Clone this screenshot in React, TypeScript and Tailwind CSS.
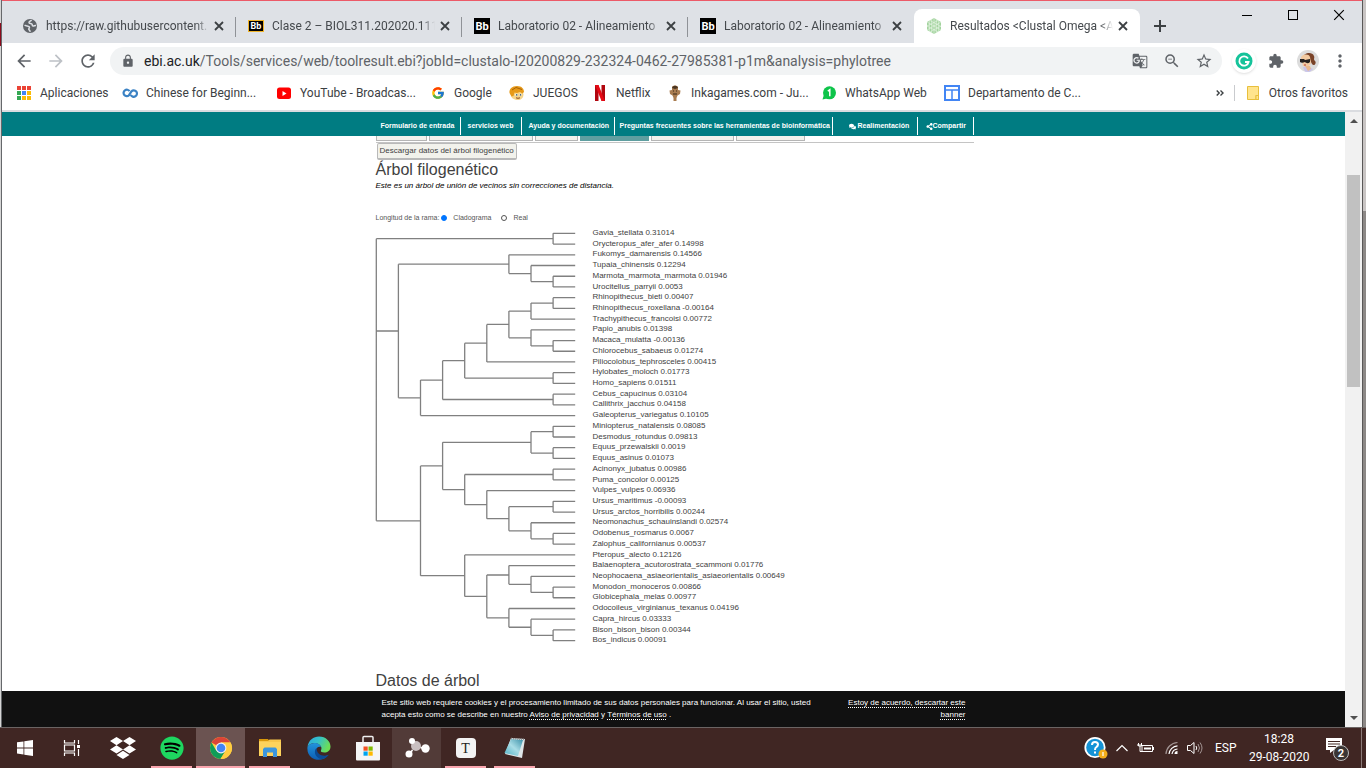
import { useState } from "react";
import type { ReactNode } from "react";
import { FaComments, FaDropbox, FaShareAlt, FaSpotify } from "react-icons/fa";
import {
  MdArrowBack,
  MdArrowForward,
  MdExtension,
  MdLock,
  MdMoreVert,
  MdRefresh,
  MdStarBorder,
  MdZoomOut,
  MdGTranslate,
} from "react-icons/md";
import { FcGoogle } from "react-icons/fc";

/* ---------- Phylogenetic tree ---------- */

type Tree = string | Tree[];

const TREE: Tree = [
  ["Gavia_stellata 0.31014", "Orycteropus_afer_afer 0.14998"],
  [
    [
      "Fukomys_damarensis 0.14566",
      ["Tupaia_chinensis 0.12294", ["Marmota_marmota_marmota 0.01946", "Urocitellus_parryii 0.0053"]],
    ],
    [
      [
        [
          [
            [
              [["Rhinopithecus_bieti 0.00407", "Rhinopithecus_roxellana -0.00164"], "Trachypithecus_francoisi 0.00772"],
              ["Papio_anubis 0.01398", ["Macaca_mulatta -0.00136", "Chlorocebus_sabaeus 0.01274"]],
            ],
            "Piliocolobus_tephrosceles 0.00415",
          ],
          ["Hylobates_moloch 0.01773", "Homo_sapiens 0.01511"],
        ],
        ["Cebus_capucinus 0.03104", "Callithrix_jacchus 0.04158"],
      ],
      "Galeopterus_variegatus 0.10105",
    ],
  ],
  [
    [
      [
        ["Miniopterus_natalensis 0.08085", "Desmodus_rotundus 0.09813"],
        ["Equus_przewalskii 0.0019", "Equus_asinus 0.01073"],
      ],
      [
        ["Acinonyx_jubatus 0.00986", "Puma_concolor 0.00125"],
        [
          "Vulpes_vulpes 0.06936",
          [
            ["Ursus_maritimus -0.00093", "Ursus_arctos_horribilis 0.00244"],
            ["Neomonachus_schauinslandi 0.02574", ["Odobenus_rosmarus 0.0067", "Zalophus_californianus 0.00537"]],
          ],
        ],
      ],
    ],
    [
      "Pteropus_alecto 0.12126",
      [
        [
          "Balaenoptera_acutorostrata_scammoni 0.01776",
          [
            "Neophocaena_asiaeorientalis_asiaeorientalis 0.00649",
            ["Monodon_monoceros 0.00866", "Globicephala_melas 0.00977"],
          ],
        ],
        [
          "Odocoileus_virginianus_texanus 0.04196",
          ["Capra_hircus 0.03333", ["Bison_bison_bison 0.00344", "Bos_indicus 0.00091"]],
        ],
      ],
    ],
  ],
];

const TREE_WIDTH = 200;
const TREE_HEIGHT = 418;
const LEVEL = 22.1;

function layoutTree(tree: Tree) {
  const leaves: string[] = [];
  const paths: string[] = [];
  const total = JSON.stringify(tree).match(/"/g)!.length / 2;
  const step = TREE_HEIGHT / total;

  function place(node: Tree): { y: number; height: number } {
    if (typeof node === "string") {
      leaves.push(node);
      return { y: (leaves.length - 0.5) * step, height: 0 };
    }
    const kids = node.map(place);
    const height = Math.max(...kids.map((k) => k.height)) + 1;
    const tip = TREE_WIDTH - 0.8;
    const x = tip - height * LEVEL;
    const top = kids[0].y;
    const bottom = kids[kids.length - 1].y;
    paths.push(`M${x} ${top}V${bottom}`);
    kids.forEach((k) => paths.push(`M${x} ${k.y}H${tip - k.height * LEVEL}`));
    return { y: (top + bottom) / 2, height };
  }

  place(tree);
  return { leaves, d: paths.join("") };
}

const { leaves: LEAVES, d: TREE_PATH } = layoutTree(TREE);

/* ---------- Browser chrome ---------- */

function Cross({ className }: { className: string }) {
  return (
    <svg viewBox="0 0 10 10" className={className} fill="none" stroke="currentColor">
      <path d="M1 1l8 8M9 1l-8 8" />
    </svg>
  );
}

function GlobeIcon() {
  return (
    <svg viewBox="0 0 16 16" className="size-4">
      <circle cx="8" cy="8" r="7" fill="#5f6368" />
      <path
        d="M2.600 7.200c1.600 1.200 3.600.4 4.600 1.600s-.8 1.600-.4 2.600 1.400.8 1.200 2.400M9.600 2.200c-.6 1-2.600.8-2.600 2.200s2.400.8 3 1.800-.2 1.600 1 1.800 1.600-.8 3-.6"
        fill="none"
        stroke="#dee1e6"
        strokeWidth="1.500"
      />
    </svg>
  );
}

function BbIcon({ gold }: { gold?: boolean }) {
  return gold ? (
    <span className="flex h-3 w-4 items-center justify-center border border-[#f0b429] bg-black text-[9px] leading-none font-bold text-white">
      Bb
    </span>
  ) : (
    <span className="flex size-4 items-center justify-center bg-black text-[11px] leading-none font-bold text-white">
      Bb
    </span>
  );
}

function HexIcon() {
  return (
    <svg viewBox="0 0 16 16" className="size-4">
      <path d="M8 0l7 4v8l-7 4-7-4V4z" fill="#a3d39e" />
      <path
        d="M1 4l14 8M1 8l11 6M4 2.500l11 6M15 4L1 12M15 8L4 14M12 2.500L1 8M3.300 2v12M5.700 1v14M8 0v16M10.300 1v14M12.700 2v12"
        stroke="#e9f6e8"
        strokeWidth=".6"
      />
    </svg>
  );
}

const TABS: { title: string; icon: ReactNode; active?: boolean; divider?: boolean }[] = [
  { title: "https://raw.githubusercontent.", icon: <GlobeIcon />, divider: true },
  { title: "Clase 2 – BIOL311.202020.1117", icon: <BbIcon gold />, divider: true },
  { title: "Laboratorio 02 - Alineamiento", icon: <BbIcon />, divider: true },
  { title: "Laboratorio 02 - Alineamiento", icon: <BbIcon /> },
  { title: "Resultados <Clustal Omega <A", icon: <HexIcon />, active: true },
];

function TabStrip() {
  return (
    <div className="flex h-[42px] shrink-0 bg-[#dee1e6] pl-2">
      <div className="flex min-w-0 flex-1 items-end">
        {TABS.map((tab, i) => (
          <div
            key={i}
            className={
              tab.active
                ? "relative flex h-[34px] w-[226px] min-w-0 items-center rounded-t-lg bg-white pr-[9px] pl-3"
                : "relative flex h-[34px] w-[226px] min-w-0 items-center pr-[9px] pl-3"
            }
          >
            <span className="flex w-4 shrink-0 justify-center">{tab.icon}</span>
            <span className="ml-2 flex-1 overflow-hidden mask-r-from-92% text-[12px] whitespace-nowrap text-[#45494d]">
              {tab.title}
            </span>
            <button aria-label="Cerrar pestaña" className="ml-[2px] flex size-4 shrink-0 items-center justify-center text-[#3c4043]">
              <Cross className="size-[10px] stroke-[1.8]" />
            </button>
            {tab.divider && <span className="absolute top-2 right-0 h-5 w-px bg-[#8f9297]" />}
          </div>
        ))}
        <button aria-label="Nueva pestaña" className="ml-[10px] flex h-[34px] w-5 items-center justify-center text-[#3c4043]">
          <svg viewBox="0 0 12 12" className="size-3" stroke="currentColor" strokeWidth="2">
            <path d="M6 0v12M0 6h12" />
          </svg>
        </button>
      </div>
      <div className="flex h-7 text-black">
        <button aria-label="Minimizar" className="flex w-[46px] items-center justify-center">
          <span className="h-px w-[10px] bg-black" />
        </button>
        <button aria-label="Maximizar" className="flex w-[46px] items-center justify-center">
          <span className="size-[10px] border border-black" />
        </button>
        <button aria-label="Cerrar" className="flex w-[46px] items-center justify-center">
          <Cross className="size-3 stroke-1" />
        </button>
      </div>
    </div>
  );
}

function Toolbar() {
  return (
    <div className="flex h-9 shrink-0 items-center bg-white px-[6px] text-[#5f6368]">
      <button aria-label="Atrás" className="flex w-8 justify-center">
        <MdArrowBack className="size-5" />
      </button>
      <button aria-label="Adelante" className="flex w-8 justify-center text-[#bdc1c6]">
        <MdArrowForward className="size-5" />
      </button>
      <button aria-label="Recargar" className="flex w-8 justify-center">
        <MdRefresh className="size-5" />
      </button>
      <div className="mx-[6px] flex h-7 min-w-0 flex-1 items-center rounded-full bg-[#f1f3f4] pr-[2px] pl-[11px]">
        <MdLock className="size-[14px] shrink-0" />
        <div className="ml-[9px] min-w-0 flex-1 overflow-hidden text-[14px] whitespace-nowrap">
          <span className="text-[#202124]">ebi.ac.uk</span>
          <span>/Tools/services/web/toolresult.ebi?jobId=clustalo-I20200829-232324-0462-27985381-p1m&amp;analysis=phylotree</span>
        </div>
        <button aria-label="Traducir" className="flex w-8 justify-center">
          <MdGTranslate className="size-4" />
        </button>
        <button aria-label="Zoom" className="flex w-8 justify-center">
          <MdZoomOut className="size-[18px]" />
        </button>
        <button aria-label="Marcar" className="flex w-8 justify-center">
          <MdStarBorder className="size-[18px]" />
        </button>
      </div>
      <button aria-label="Grammarly" className="flex w-8 justify-center">
        <svg viewBox="0 0 24 24" className="size-6 rounded-full bg-white shadow">
          <circle cx="12" cy="12" r="8.500" fill="#15c39a" />
          <path d="M16 9.500A4.700 4.700 0 1 0 16.600 13H13" fill="none" stroke="#fff" strokeWidth="1.800" />
        </svg>
      </button>
      <button aria-label="Extensiones" className="flex w-8 justify-center">
        <MdExtension className="size-4" />
      </button>
      <button aria-label="Perfil" className="flex w-8 justify-center">
        <svg viewBox="0 0 22 22" className="size-[22px] rounded-full bg-[#dcdcdc]">
          <path d="M6 8c0-5 9-7 11-2 1 2-1 3 1 5s-1 6-3 3l-3-6z" fill="#7a4328" />
          <path d="M4 8c0-4 8-5 9-1l1 6-3 4-5-1z" fill="#f2c9a0" />
          <path d="M3 9h4l1 1 5-1v3c-2 2-4 1-5 0-2 1-4 1-5 0z" fill="#26211f" />
          <path d="M6 17h6l4 2-3 3H8z" fill="#c9c4ea" />
          <path d="M8 16h5l1 3-3 2z" fill="#eab98e" />
          <path d="M7 15h2" stroke="#b03a35" />
        </svg>
      </button>
      <button aria-label="Menú" className="flex w-8 justify-center">
        <MdMoreVert className="size-5" />
      </button>
    </div>
  );
}

function AppsIcon() {
  const colors = ["#ea4335", "#ea4335", "#ea4335", "#34a853", "#4285f4", "#fbbc05", "#34a853", "#fbbc05", "#fbbc05"];
  return (
    <svg viewBox="0 0 16 16" className="size-4">
      {colors.map((c, i) => (
        <rect key={i} x={1 + (i % 3) * 5} y={1 + Math.floor(i / 3) * 5} width="4" height="4" fill={c} />
      ))}
    </svg>
  );
}

const BOOKMARKS: { label: string; width: string; icon: ReactNode }[] = [
  { label: "Aplicaciones", width: "w-[106px]", icon: <AppsIcon /> },
  {
    label: "Chinese for Beginn...",
    width: "w-[154px]",
    icon: (
      <svg viewBox="0 0 16 16" className="size-4" fill="none" stroke="#3b82c4" strokeWidth="2.200">
        <path d="M7.500 6.200A3.200 3.200 0 1 0 7 10.200L9.400 6.400a3.200 3.200 0 1 1-.6 3.400" />
      </svg>
    ),
  },
  {
    label: "YouTube - Broadcas...",
    width: "w-[154px]",
    icon: (
      <svg viewBox="0 0 16 16" className="size-4">
        <rect x="1" y="2.500" width="14" height="11.500" rx="2.500" fill="#f00" />
        <path d="M6.500 6v5l4-2.500z" fill="#fff" />
      </svg>
    ),
  },
  { label: "Google", width: "w-[79px]", icon: <FcGoogle className="size-[14px]" /> },
  {
    label: "JUEGOS",
    width: "w-[83px]",
    icon: (
      <svg viewBox="0 0 16 16" className="size-4">
        <path d="M1.500 8c0 5 3.500 7 7 7s6-2 6-6l-2-4H4z" fill="#f6d58a" />
        <path d="M.5 8C0 4 3 1 8 1s7 3 7 6l-1.500 1.500L11 7 8 8 5.500 7.500 4.500 11l-2 .5z" fill="#e79a18" />
        <path d="M3 5l4-2.500 6 2" stroke="#a86208" fill="none" />
        <ellipse cx="7.500" cy="9.800" rx="1.300" ry="1" fill="#fff" />
        <ellipse cx="11.500" cy="9.800" rx="1.300" ry="1" fill="#fff" />
        <circle cx="7.700" cy="9.900" r=".8" fill="#3b5b70" />
        <circle cx="11.500" cy="9.900" r=".8" fill="#3b5b70" />
        <path d="M7 12.800q2 1 4 0" stroke="#8b4a1c" fill="none" />
      </svg>
    ),
  },
  {
    label: "Netflix",
    width: "w-[75px]",
    icon: (
      <svg viewBox="0 0 16 16" className="size-4">
        <path d="M3 0h3.500v16H3zM9.500 0H13v16H9.500z" fill="#b1060f" />
        <path d="M3 0h3.500L13 16H9.500z" fill="#e50914" />
      </svg>
    ),
  },
  {
    label: "Inkagames.com - Ju...",
    width: "w-[154px]",
    icon: (
      <svg viewBox="0 0 16 16" className="size-4">
        <path d="M5 2c1-2 5-2 6 0v3l2.500.5L13 9l-2.500 1.500L9.500 13v3h-3v-3l-1-2.500L3 9l-.5-3.500L5 5z" fill="#a97c50" />
        <path d="M5 3c1-3 5-3 6 0L8 4z" fill="#4b3622" />
        <path d="M6 6h1M9 6h1M6 9h4" stroke="#3a2817" />
      </svg>
    ),
  },
  {
    label: "WhatsApp Web",
    width: "w-[123px]",
    icon: (
      <svg viewBox="0 0 16 16" className="size-4">
        <circle cx="8.500" cy="7.800" r="6.500" fill="#0ec44a" />
        <path d="M1.500 14.500l1.500-5 3 4z" fill="#0ec44a" />
        <path d="M6.800 6.200l2-1.400v6.500" stroke="#fff" strokeWidth="1.500" fill="none" />
      </svg>
    ),
  },
  {
    label: "Departamento de C...",
    width: "w-[154px]",
    icon: (
      <svg viewBox="0 0 16 16" className="size-4" fill="none" stroke="#4285f4">
        <rect x="1" y="1" width="14" height="14" strokeWidth="2" />
        <path d="M1 5h14M8 5v10" strokeWidth="1.500" />
      </svg>
    ),
  },
];

function BookmarksBar() {
  return (
    <nav className="flex h-[33px] shrink-0 items-center border-b-2 border-[#dadce0] bg-white px-[14px] pb-1 text-[12px] whitespace-nowrap text-[#3c4043]">
      {BOOKMARKS.map((b) => (
        <a key={b.label} href="#" className={`flex shrink-0 items-center gap-2 ${b.width}`}>
          <span className="flex w-4 shrink-0 justify-center">{b.icon}</span>
          {b.label}
        </a>
      ))}
      <svg viewBox="0 0 8 6" className="ml-auto h-[6px] w-2" fill="none" stroke="#3c4043" strokeWidth="1.400">
        <path d="M.7.5L3.200 3 .7 5.500M4.500.5L7 3 4.500 5.500" />
      </svg>
      <span className="mx-[10px] h-4 w-px bg-[#c9cbce]" />
      <a href="#" className="flex items-center gap-2">
        <svg viewBox="0 0 16 16" className="size-4">
          <path d="M2.500 1.500h11v9h-2.500v4H2.500z" fill="#ffe48c" stroke="#e8bf3c" />
          <rect x="11" y="10.500" width="2.500" height="4" fill="#ffe48c" stroke="#e8bf3c" />
        </svg>
        Otros favoritos
      </a>
    </nav>
  );
}

/* ---------- Page ---------- */

function SiteHeader() {
  const item = "flex h-[18px] items-center border-r border-white whitespace-nowrap";
  return (
    <header className="flex h-6 shrink-0 items-end bg-[#007c82] pb-px pl-[2px]">
      <nav className="mx-auto flex w-full max-w-[598px] text-[7px] font-bold text-white">
        <a href="#" className={`${item} w-[85px] pl-[5px]`}>Formulario de entrada</a>
        <a href="#" className={`${item} w-[61px] pl-[7px]`}>servicios web</a>
        <a href="#" className={`${item} w-[93px] pl-[7px]`}>Ayuda y documentación</a>
        <a href="#" className={`${item} w-[218px] pl-[5px]`}>Preguntas frecuentes sobre las herramientas de bioinformática</a>
        <a href="#" className={`${item} flex-1 gap-[2px] pl-4`}>
          <FaComments className="size-[7px]" />
          Realimentación
        </a>
        <a href="#" className={`${item} w-14 pl-2`}>
          <FaShareAlt className="size-[7px]" />
          Compartir
        </a>
      </nav>
    </header>
  );
}

function ResultTabs() {
  const tab = "border-x border-b border-[#b5b5b5] bg-[#f2f2ec]";
  return (
    <div className="flex h-[7px] gap-[2px] border-b border-[#c4c4c4] pb-px">
      <span className={`${tab} w-[51px]`} />
      <span className={`${tab} w-[104px]`} />
      <span className={`${tab} w-[43px]`} />
      <span className="w-[69px] bg-[#5f9ea0]" />
      <span className={`${tab} w-[83px]`} />
      <span className={`${tab} w-[69px]`} />
    </div>
  );
}

function BranchRadio({
  label,
  checked,
  onSelect,
}: {
  label: string;
  checked: boolean;
  onSelect: () => void;
}) {
  return (
    <label className="flex items-center gap-[6px]">
      <input
        type="radio"
        name="branch"
        checked={checked}
        onChange={onSelect}
        className="size-[6px] appearance-none rounded-full border border-[#555] bg-white checked:border-[#0075ff] checked:bg-[#0075ff]"
      />
      {label}
    </label>
  );
}

function Page() {
  const [mode, setMode] = useState("Cladograma");
  return (
    <main className="min-h-0 flex-1 overflow-hidden bg-white pl-[2px]">
      <div className="mx-auto w-full max-w-[598px] text-[#414141]">
        <ResultTabs />
        <button className="ml-px block h-[17px] rounded-[2px] border border-b-2 border-[#b9b9b9] bg-[#f2f2ec] px-[2px] text-[8px] leading-[14px] whitespace-nowrap">
          Descargar datos del árbol filogenético
        </button>
        <h1 className="text-[16px] leading-5">Árbol filogenético</h1>
        <p className="text-[8px] leading-3 text-black italic">
          Este es un árbol de unión de vecinos sin correcciones de distancia.
        </p>
        <div className="mt-5 flex items-center gap-[2px] text-[7px] leading-3 text-[#555]">
          <span>Longitud de la rama:</span>
          <div className="flex gap-[10px]">
            {["Cladograma", "Real"].map((m) => (
              <BranchRadio key={m} label={m} checked={mode === m} onSelect={() => setMode(m)} />
            ))}
          </div>
        </div>
        <div className="mt-1 flex gap-[17px]">
          <svg viewBox={`0 0 ${TREE_WIDTH} ${TREE_HEIGHT}`} className="h-[418px] w-[200px] shrink-0 overflow-visible">
            <path d={TREE_PATH} fill="none" stroke="#808080" strokeWidth="1.300" />
          </svg>
          <ul className="grid h-[418px] auto-rows-fr text-[8px] leading-[9px]">
            {LEAVES.map((leaf) => (
              <li key={leaf} className="whitespace-nowrap">
                {leaf}
              </li>
            ))}
          </ul>
        </div>
        <h2 className="mt-[25px] text-[16px] leading-5">Datos de árbol</h2>
      </div>
    </main>
  );
}

function CookieBanner() {
  const link = "underline decoration-dotted underline-offset-2";
  return (
    <footer className="h-9 shrink-0 bg-[#111] pt-[6px] pl-[2px]">
      <div className="mx-auto flex w-full max-w-[598px] justify-between pr-2 pl-[6px] text-[8px] leading-3 text-white">
        <p className="w-[440px]">
          Este sitio web requiere cookies y el procesamiento limitado de sus datos personales para funcionar. Al usar el
          sitio, usted acepta esto como se describe en nuestro <a href="#" className={link}>Aviso de privacidad</a> y{" "}
          <a href="#" className={link}>Términos de uso</a> .
        </p>
        <p className="w-[130px] text-right">
          <a href="#" className={link}>Estoy de acuerdo, descartar este banner</a>
        </p>
      </div>
    </footer>
  );
}

function ScrollBar() {
  return (
    <div className="flex w-[17px] shrink-0 flex-col items-center justify-between bg-[#f1f1f1] py-[7px]">
      <svg viewBox="0 0 8 4" className="h-1 w-2" fill="#505050"><path d="M0 4l4-4 4 4z" /></svg>
      <div className="flex w-full flex-1 flex-col px-[2px] pt-[52px]">
        <div className="h-[212px] bg-[#c1c1c1]" />
      </div>
      <svg viewBox="0 0 8 4" className="h-1 w-2" fill="#505050"><path d="M0 0l4 4 4-4z" /></svg>
    </div>
  );
}

/* ---------- Taskbar ---------- */

const TASKS: { name: string; icon: ReactNode; open?: boolean; focus?: "strong" | "soft" }[] = [
  {
    name: "Inicio",
    icon: (
      <svg viewBox="0 0 16 16" className="size-4" fill="#fff">
        <path d="M0 2.300l6.500-.9v6.100H0zM7.300 1.300L16 0v7.500H7.300zM0 8.400h6.500v6.100L0 13.600zM7.300 8.400H16V16l-8.700-1.300z" />
      </svg>
    ),
  },
  {
    name: "Vista de tareas",
    icon: (
      <svg viewBox="0 0 18 18" className="mr-1 size-[18px]" fill="none" stroke="#fff" strokeWidth="1.200">
        <path d="M1.500 1v3h10V1M1.500 17v-3h10v3M1.500 6h10v6h-10zM15.500 1v4M15.500 10v7" />
        <path d="M14 6h3v3h-3z" fill="#fff" stroke="none" />
      </svg>
    ),
  },
  { name: "Dropbox", icon: <FaDropbox className="size-[26px] text-white" /> },
  {
    name: "Spotify",
    open: true,
    icon: (
      <span className="flex size-[22px] items-center justify-center rounded-full bg-black">
        <FaSpotify className="size-6 shrink-0 text-[#1ed760]" />
      </span>
    ),
  },
  {
    name: "Chrome",
    open: true,
    focus: "strong",
    icon: (
      <svg viewBox="0 0 24 24" className="size-6">
        <circle cx="12" cy="12" r="11" fill="#ffcd40" />
        <path d="M12 12L2.500 6.500A11 11 0 0 1 21.500 6.500H12z" fill="#db4437" />
        <path d="M2.500 6.500A11 11 0 0 0 11.500 23l5-8.300L12 12l-4.700 2.800z" fill="#0f9d58" />
        <path d="M12 6.500h9.500A11 11 0 0 1 11.500 23l5.200-8.300z" fill="#ffcd40" />
        <circle cx="12" cy="12" r="5.400" fill="#f1f1f1" />
        <circle cx="12" cy="12" r="4.300" fill="#4285f4" />
      </svg>
    ),
  },
  {
    name: "Explorador de archivos",
    open: true,
    icon: (
      <svg viewBox="0 0 24 22" className="h-[22px] w-6">
        <path d="M1 2h9l2 3h-11z" fill="#d9980b" />
        <path d="M1 4h22v15H1z" fill="#fdd35c" />
        <path d="M1 4h9l1.500-1.500H23V5H1z" fill="#f7c64b" />
        <path d="M5 20v-8l1.500-1.500h11L19 12v8h-4v-4.500H9V20z" fill="#3b96dd" />
      </svg>
    ),
  },
  {
    name: "Edge",
    icon: (
      <svg viewBox="0 0 24 24" className="size-6">
        <defs>
          <linearGradient id="edgeTop" x1="0" y1="0" x2="1" y2=".4">
            <stop offset="0" stopColor="#2aa7e0" />
            <stop offset=".5" stopColor="#36c1c8" />
            <stop offset="1" stopColor="#6bde57" />
          </linearGradient>
          <linearGradient id="edgeBody" x1="0" y1="0" x2="0" y2="1">
            <stop offset="0" stopColor="#2294dc" />
            <stop offset="1" stopColor="#0d5db3" />
          </linearGradient>
        </defs>
        <path d="M.5 11C1.500 4 6.500.5 12 .5 19 .5 23.500 5.500 23.500 10.500c0 4-3 6-6.200 6-2.300 0-4-1-3.300-2.300C16 11 12 7 8 7c-3.500 0-6 1.500-7.500 4z" fill="url(#edgeTop)" />
        <path d="M.5 11C2 8.500 5 7 8 7c3 0 5.500 1.800 6 4-5-1-6 4-4 7s6 4 11 1c-4 6-12 6-16.500 2.500C1.500 19 0 15.500.5 11z" fill="url(#edgeBody)" />
        <path d="M9.500 12c-4 4 0 11.500 6 11 2.500-.5 4.800-2 6.300-4.300-5 2.600-12.300.3-12.300-6.700z" fill="#0b4a94" />
      </svg>
    ),
  },
  {
    name: "Microsoft Store",
    icon: (
      <svg viewBox="0 0 24 26" className="h-[26px] w-6">
        <path d="M7 8V2.500Q7 1.500 8 1.500h8q1 0 1 1V8" fill="none" stroke="#eee" strokeWidth="1.500" />
        <path d="M0 7h24v17.500q0 1-1 1H1q-1 0-1-1z" fill="#f5f5f5" />
        <path d="M7.500 11.500h4.200v4.200H7.500z" fill="#f25022" />
        <path d="M12.500 11.500h4.200v4.200h-4.200z" fill="#7fba00" />
        <path d="M7.500 16.500h4.200v4.200H7.500z" fill="#00a4ef" />
        <path d="M12.500 16.500h4.200v4.200h-4.200z" fill="#ffb900" />
      </svg>
    ),
  },
  {
    name: "Moléculas",
    focus: "soft",
    icon: (
      <svg viewBox="0 0 26 22" className="h-[22px] w-[26px]">
        <circle cx="12" cy="9" r="5" fill="#c9bfc0" />
        <circle cx="8" cy="4" r="3" fill="#fff" />
        <circle cx="5" cy="17" r="3.500" fill="#fff" />
        <circle cx="21.500" cy="11.500" r="4.200" fill="#fff" />
        <path d="M7 15l1.500-2M16.500 10.500l2 .5" stroke="#fff" strokeWidth="1.500" />
      </svg>
    ),
  },
  {
    name: "Typora",
    open: true,
    icon: (
      <span className="flex size-5 items-center justify-center rounded-sm bg-[#f3f3f3] font-['Liberation_Serif',serif] text-[14px] text-[#222]">
        T
      </span>
    ),
  },
  {
    name: "Bloc de notas",
    open: true,
    icon: (
      <svg viewBox="0 0 24 24" className="size-6">
        <defs>
          <linearGradient id="note" x1="0" y1="1" x2="1" y2="0">
            <stop offset="0" stopColor="#4fb0c4" />
            <stop offset=".5" stopColor="#a9dde6" />
            <stop offset="1" stopColor="#3a90a8" />
          </linearGradient>
        </defs>
        <path d="M8 2l14 1-3 19-17-4z" fill="#dfe6e8" />
        <path d="M8 3l12 1-5 16L1.500 17z" fill="url(#note)" />
        <path d="M8 2.500l14 1" stroke="#8b8f90" strokeWidth="1.500" strokeDasharray="1 1" />
      </svg>
    ),
  },
];

function Taskbar() {
  return (
    <footer className="flex h-[41px] shrink-0 border-t border-[#6b6463] bg-[#402623] text-[12px] text-white">
      {TASKS.map((t) => (
        <button
          key={t.name}
          aria-label={t.name}
          className={
            t.focus === "strong"
              ? "relative flex w-[49px] shrink-0 items-center justify-center bg-[#6b5351]"
              : t.focus === "soft"
                ? "relative flex w-[49px] shrink-0 items-center justify-center bg-[#523b38]"
                : "relative flex w-[49px] shrink-0 items-center justify-center"
          }
        >
          {t.icon}
          {t.open && (
            <span
              className={
                t.focus
                  ? "absolute inset-x-0 bottom-0 h-[2px] bg-[#f9a5ae]"
                  : "absolute inset-x-1 bottom-0 h-[2px] bg-[#f9a5ae]"
              }
            />
          )}
        </button>
      ))}
      <div className="ml-auto flex items-center">
        <svg viewBox="0 0 24 24" className="size-6">
          <circle cx="11" cy="11.500" r="9.700" fill="#1593d6" stroke="#fff" strokeWidth="1.800" />
          <path d="M8 9q0-3 3-3t3 2.600q0 1.600-1.600 2.400Q11 11.800 11 14M11 15.500v2" fill="none" stroke="#fff" strokeWidth="2" />
          <circle cx="19" cy="18" r="4.500" fill="#f3ae1b" />
          <path d="M19 16v4" stroke="#fff" strokeWidth="1.200" />
        </svg>
        <svg viewBox="0 0 12 8" className="ml-2 h-2 w-3" fill="none" stroke="#fff" strokeWidth="1.200">
          <path d="M.5 7L6 1.500 11.500 7" />
        </svg>
        <svg viewBox="0 0 18 12" className="ml-[9px] h-3 w-[18px]" fill="none" stroke="#fff">
          <path d="M5 3.500h10.500v6H5zM16.500 5v3M1.500 1v3h3V1M3 4v5.500h2M0 3h5" />
          <path d="M7 5.500h7v2H7z" fill="#fff" stroke="none" />
        </svg>
        <svg viewBox="0 0 14 14" className="ml-[10px] size-[14px]" fill="none" stroke="#fff" strokeWidth="1.200">
          <path d="M1 13A12 12 0 0 1 12.500 1.500" stroke="#a39594" />
          <path d="M4 13A9 9 0 0 1 12.500 4.800M7 13A6 6 0 0 1 12.500 8" />
          <path d="M9.500 13a3 3 0 0 1 3-3v3z" fill="#fff" stroke="none" />
        </svg>
        <svg viewBox="0 0 16 14" className="ml-2 h-[14px] w-4" fill="none" stroke="#fff">
          <path d="M.5 4.500h3l3.500-3v11l-3.500-3h-3zM9 5q1.500 2 0 4" />
          <path d="M11 3q3 4 0 8M13 1.500q4 5.500 0 11" stroke="#a39594" />
        </svg>
        <span className="ml-3 w-5 text-center">ESP</span>
        <time className="ml-[14px] w-[60px] text-center leading-[18px] whitespace-nowrap">
          18:28
          <br />
          29-08-2020
        </time>
        <svg viewBox="0 0 26 26" className="mr-[10px] ml-4 size-[26px]">
          <path d="M1 3h16v12h-8l-4 3v-3H1z" fill="#fff" />
          <path d="M3 6.500h12M3 9h12M3 11.500h8" stroke="#402623" />
          <circle cx="16" cy="18" r="7.500" fill="#3a3534" stroke="#bbb" />
          <text x="16" y="22" textAnchor="middle" fontSize="11" fontWeight="bold" fill="#fff">2</text>
        </svg>
      </div>
      <span className="mr-1 w-px bg-[#8a7977]" />
    </footer>
  );
}

export default function App() {
  return (
    <div className="flex h-screen flex-col overflow-hidden bg-white font-['Roboto','Noto_Sans',sans-serif]">
      <div className="flex min-h-0 flex-1">
        <div className="flex w-[2px] shrink-0 flex-col border-r border-[#66686b] bg-[#d5d5d5]">
          <span className="mt-[23px] h-[23px] bg-[#8c0b1c]" />
        </div>
        <div className="flex min-w-0 flex-1 flex-col border-t border-[#ec5a68]">
          <TabStrip />
          <Toolbar />
          <BookmarksBar />
          <div className="flex min-h-0 flex-1">
            <div className="flex min-w-0 flex-1 flex-col font-['Liberation_Sans',Arial,sans-serif]">
              <SiteHeader />
              <Page />
              <CookieBanner />
            </div>
            <ScrollBar />
          </div>
        </div>
        <div className="flex w-1 shrink-0 flex-col border-l border-[#5a5858] bg-[#8c8886]">
          <span className="h-[211px] bg-[#c9c5c4]" />
        </div>
      </div>
      <Taskbar />
    </div>
  );
}
